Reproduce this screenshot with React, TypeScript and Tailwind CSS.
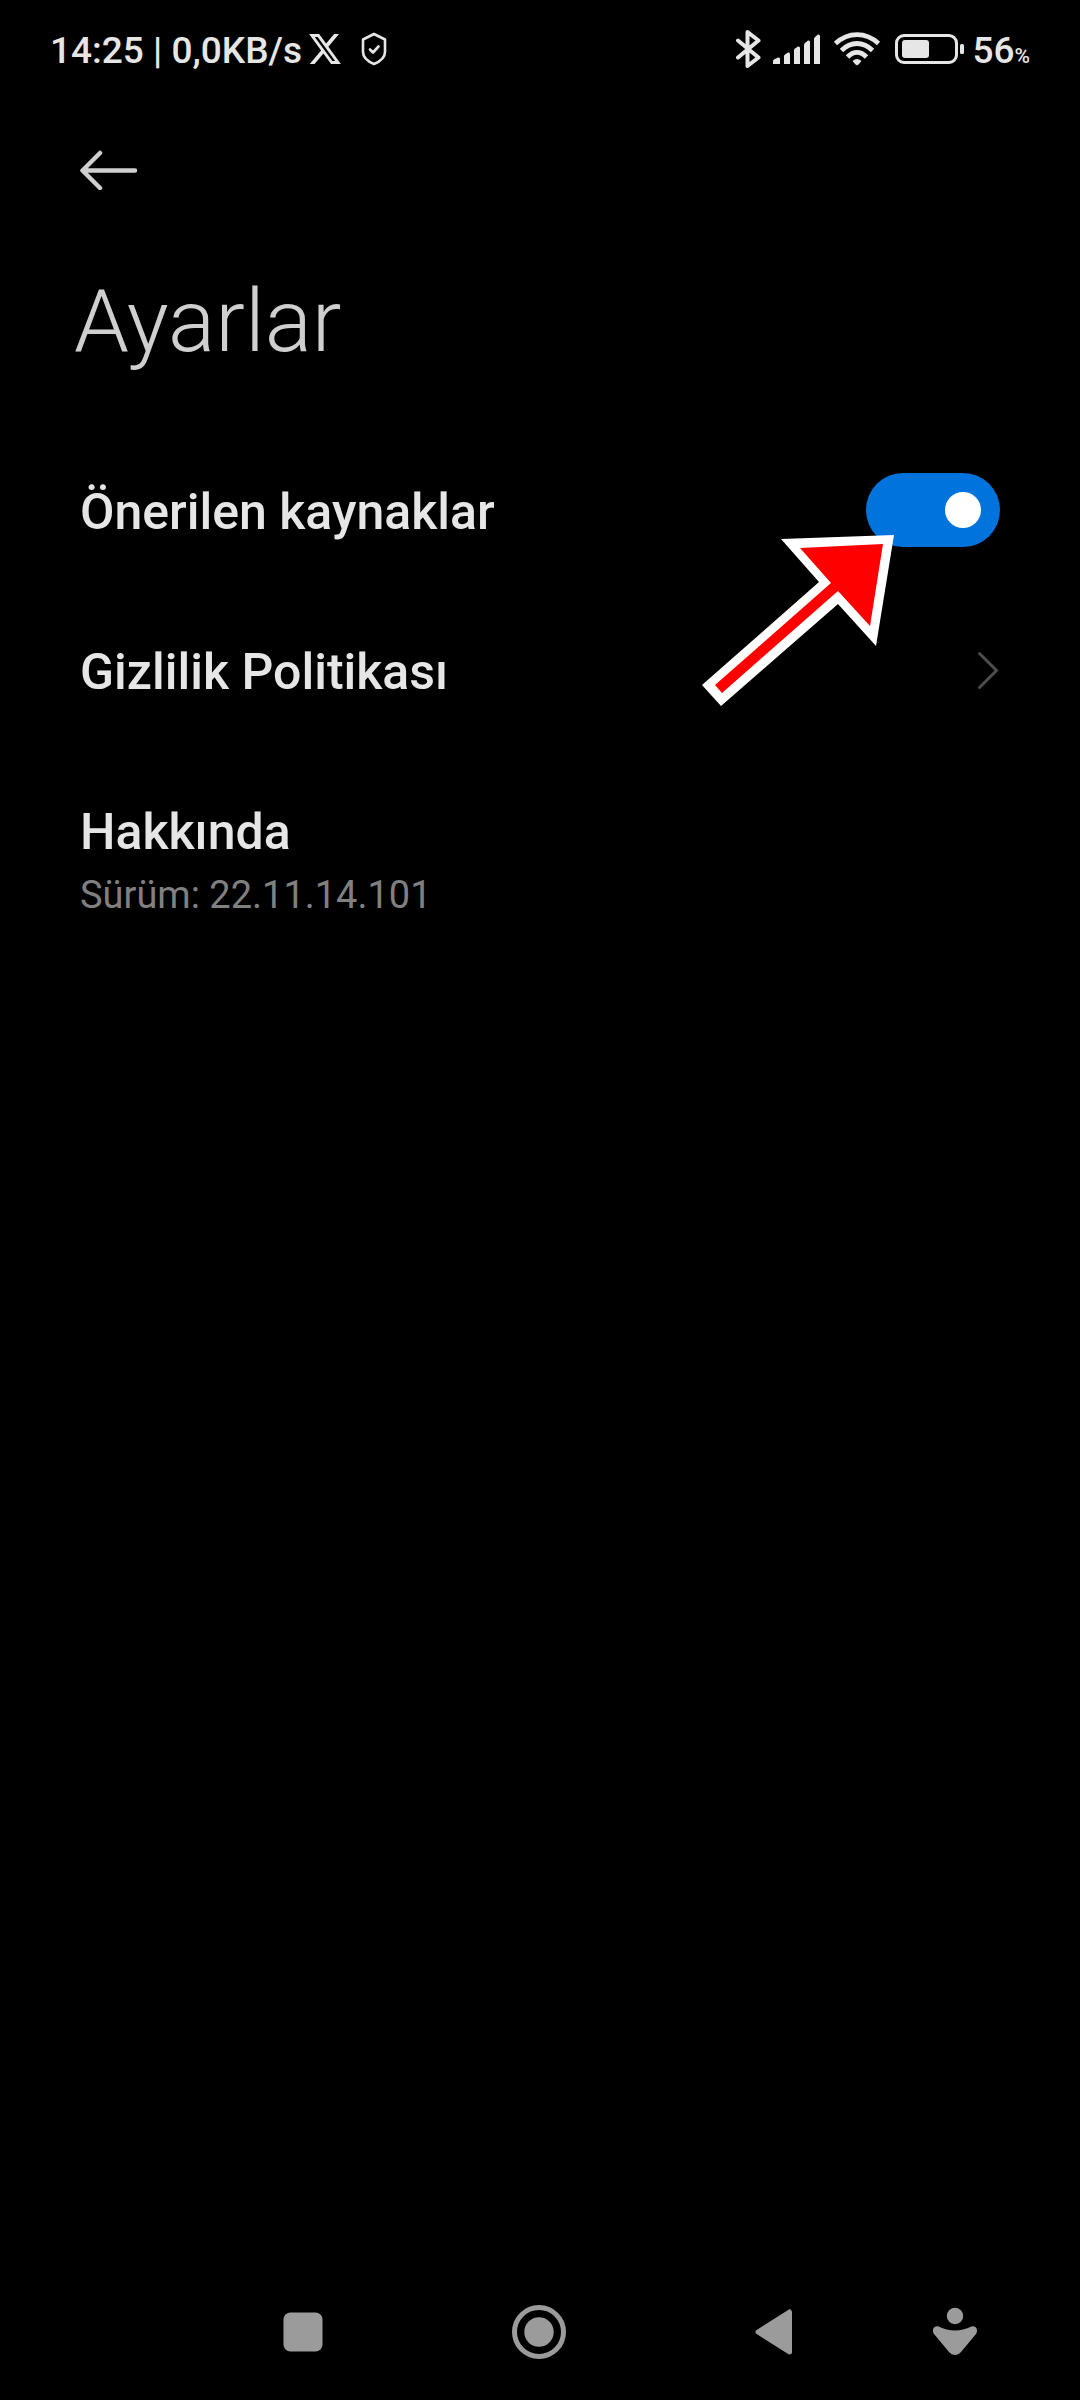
import { useState } from "react";

const StatusBar = () => {
  return (
    <div className="flex h-[98px] items-center justify-between px-[50px] text-[37px] leading-[44px] font-medium text-[#e6e6e6]">
      <div className="flex items-center">
        <span className="pt-1">14:25 | 0,0KB/s</span>
        <svg className="ml-[7px] h-[30px] w-[32px]" viewBox="1.2 2.2 21.7 19.6" preserveAspectRatio="none" fill="currentColor">
          <path d="M18.244 2.25h3.308l-7.227 8.26 8.502 11.24H16.17l-5.214-6.817L4.99 21.75H1.68l7.73-8.835L1.254 2.25H8.08l4.713 6.231zm-1.161 17.52h1.833L7.084 4.126H5.117z" />
        </svg>
        <svg
          className="ml-5 h-[34px] w-[26px]"
          viewBox="0 0 26 34"
          fill="none"
          stroke="currentColor"
          strokeWidth="2.6"
          strokeLinejoin="round"
          strokeLinecap="round"
        >
          <path d="M13 2 24 7.500V20C24 25 19 29.500 13 32C7 29.500 2 25 2 20V7.500Z" />
          <path d="M9 17.500 12 20.500 17.500 14.500" />
        </svg>
      </div>

      <div className="flex items-center">
        <svg
          className="h-[40px] w-[26px]"
          viewBox="0 0 26 40"
          fill="none"
          stroke="currentColor"
          strokeWidth="4"
          strokeLinejoin="round"
          strokeLinecap="round"
        >
          <path d="M3 11.500 23.500 28.500 12.500 37V3L23.500 11.500 3 28.500" />
        </svg>
        <svg className="ml-3 h-[32px] w-[48px]" viewBox="0 0 48 32" fill="currentColor">
          <path d="M0 31V28Q0 27 1 26.500L5 24.500Q7 24 7 26V31Z" />
          <path d="M11 31V23Q11 22 12 21.500L15 19.500Q17 19 17 21V31Z" />
          <path d="M21 31V17Q21 16 22 15.500L25 13.500Q27 13 27 15V31Z" />
          <path d="M31 31V12Q31 11 32 10L35 7.500Q37 7 37 9V31Z" />
          <path d="M41 31V6Q41 5 42 4L45 1.500Q47 1 47 3V31Z" />
        </svg>
        <svg
          className="ml-3 h-[34px] w-[48px]"
          viewBox="0 0 48 34"
          fill="none"
          stroke="currentColor"
          strokeWidth="4.8"
        >
          <path d="M2.500 11.500Q12 2.600 24 2.600T45.500 11.500" />
          <path d="M8.500 18.500Q15.500 11.500 24 11.500T39.500 18.500" />
          <path d="M14.500 25Q19 20.300 24 20.300T33.500 25" />
          <path d="M19.500 29Q24 25 28.500 29L25.500 32.500Q24 34 22.500 32.500Z" fill="currentColor" stroke="none" />
        </svg>
        <svg className="ml-[14px] h-[32px] w-[70px]" viewBox="0 0 70 32" fill="none">
          <rect x="1.500" y="2.500" width="60" height="27" rx="7.500" stroke="currentColor" strokeWidth="3" />
          <rect x="7" y="7" width="27" height="18" rx="3" fill="currentColor" />
          <rect x="65" y="11" width="4" height="10" rx="1.500" fill="currentColor" />
        </svg>
        <span className="ml-[7px] pt-1">
          56<span className="text-[21px] leading-none">%</span>
        </span>
      </div>
    </div>
  );
};

// Pointer drawn over the switch
const PointerArrow = () => {
  return (
    <svg
      className="pointer-events-none absolute top-[105px] right-[106px] h-[172px] w-[192px]"
      viewBox="0 0 192 172"
      aria-hidden="true"
    >
      <path d="M192 0 79 4 117 47 0 150 19 171 136 69 174 111Z" fill="#fff" />
      <path d="M181 9 98 13 129 48 13 150 20 158 136 56 168 91Z" fill="#f00" />
    </svg>
  );
};

const NavBar = () => {
  return (
    <nav className="grid h-[136px] grid-cols-[236fr_236fr_236fr_124fr] items-center pl-[185px] pr-[63px] text-[#9b9b9b]">
      <button aria-label="Son uygulamalar" className="flex justify-center">
        <svg className="size-[56px]" viewBox="0 0 56 56" fill="currentColor">
          <rect x="8.500" y="8.500" width="39" height="39" rx="7" />
        </svg>
      </button>
      <button aria-label="Ana ekran" className="flex justify-center">
        <svg className="size-[56px]" viewBox="0 0 56 56" fill="currentColor">
          <circle cx="28" cy="28" r="24.500" fill="none" stroke="currentColor" strokeWidth="5" />
          <circle cx="28" cy="28" r="14.700" />
        </svg>
      </button>
      <button aria-label="Geri dön" className="flex justify-center">
        <svg
          className="size-[56px]"
          viewBox="0 0 56 56"
          fill="currentColor"
          stroke="currentColor"
          strokeWidth="5"
          strokeLinejoin="round"
        >
          <path d="M11 28 42.500 8V48Z" />
        </svg>
      </button>
      <button aria-label="Erişilebilirlik" className="flex justify-center">
        <svg className="size-[56px]" viewBox="0 0 56 56" fill="currentColor">
          <circle cx="28" cy="12" r="8.200" />
          <path d="M11.500 22.500Q20 26.500 28 26.500T44.500 22.500C49.500 21.500 51.500 26.500 49 30L34 48C30.500 52 25.500 52 22 48L7 30C4.500 26.500 6.500 21.500 11.500 22.500Z" />
        </svg>
      </button>
    </nav>
  );
};

const App = () => {
  const [suggested, setSuggested] = useState(true);

  return (
    <div className="flex min-h-screen flex-col bg-black font-[Roboto,sans-serif]">
      <StatusBar />

      <main className="flex-1 px-20">
        <header>
          <button aria-label="Geri" className="flex h-36 items-center text-[#cfcfcf]">
            <svg
              className="h-[40px] w-[58px]"
              viewBox="0 0 58 40"
              fill="none"
              stroke="currentColor"
              strokeWidth="4.500"
              strokeLinecap="round"
              strokeLinejoin="round"
            >
              <path d="M20 3 2.500 20.500 20 38M3 20.500H55" />
            </svg>
          </button>
          <h1 className="-ml-1.5 pt-[27px] pb-[57px] text-[88px] leading-[104px] font-light text-[#cfcfcf]">
            Ayarlar
          </h1>
        </header>

        <section className="text-[50px] leading-[60px] font-medium text-[#e6e6e6]">
          <div className="relative flex h-40 items-center justify-between">
            <label htmlFor="suggested" className="pt-1">
              Önerilen kaynaklar
            </label>
            <input
              id="suggested"
              type="checkbox"
              role="switch"
              checked={suggested}
              onChange={(e) => setSuggested(e.target.checked)}
              className="flex h-[74px] w-[134px] cursor-pointer appearance-none items-center rounded-full bg-[#3a3a3a] px-[19px] before:size-9 before:rounded-full before:bg-white checked:justify-end checked:bg-[#0073dd]"
            />
            <PointerArrow />
          </div>

          <a href="#privacy" className="flex h-40 items-center justify-between">
            <span className="pt-1">Gizlilik Politikası</span>
            <svg
              className="h-[40px] w-[24px]"
              viewBox="0 0 24 40"
              fill="none"
              stroke="#4d4d4d"
              strokeWidth="3"
              strokeLinecap="round"
            >
              <path d="M3.500 3.500 20.500 20.500 3.500 37.500" />
            </svg>
          </a>

          <div className="pt-[52px]">
            <p>Hakkında</p>
            <p className="pt-[3px] text-[38px] font-normal text-[#808080]">Sürüm: 22.11.14.101</p>
          </div>
        </section>
      </main>

      <NavBar />
    </div>
  );
};

export default App;
